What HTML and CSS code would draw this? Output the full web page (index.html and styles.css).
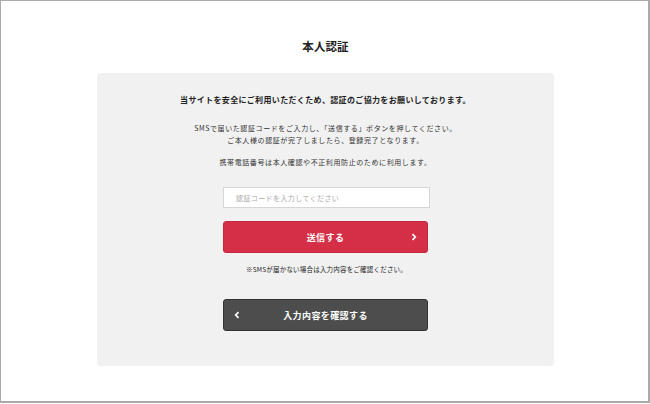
FILE: index.html
```html
<!DOCTYPE html>
<html lang="ja">
<head>
<meta charset="utf-8">
<title>本人認証</title>
<link rel="stylesheet" href="styles.css">
</head>
<body>
<div class="frame">
  <h1 class="title">本人認証</h1>
  <main class="card">
    <p class="lead">当サイトを安全にご利用いただくため、認証のご協力をお願いしております。</p>
    <p class="text">SMSで届いた認証コードをご入力し、「送信する」ボタンを押してください。<br>ご本人様の認証が完了しましたら、登録完了となります。</p>
    <p class="text text-second">携帯電話番号は本人確認や不正利用防止のために利用します。</p>
    <form class="form">
      <input class="code-input" type="text" placeholder="認証コードを入力してください">
      <button class="btn btn-primary" type="button">
        <span class="btn-label">送信する</span>
        <svg class="chev chev-right" width="6" height="8" viewBox="0 0 6 8"><path d="M1.5 1.2 L4.3 4 L1.5 6.8" fill="none" stroke="#fff" stroke-width="1.7"/></svg>
      </button>
      <p class="note">※SMSが届かない場合は入力内容をご確認ください。</p>
      <button class="btn btn-dark" type="button">
        <svg class="chev chev-left" width="6" height="8" viewBox="0 0 6 8"><path d="M4.5 1.2 L1.7 4 L4.5 6.8" fill="none" stroke="#fff" stroke-width="1.7"/></svg>
        <span class="btn-label">入力内容を確認する</span>
      </button>
    </form>
  </main>
</div>
</body>
</html>
```
FILE: styles.css
```css
* { box-sizing: border-box; }
html, body { margin: 0; padding: 0; background: #fff; }
body {
  font-family: "Noto Sans CJK JP", "Noto Sans", sans-serif;
  color: #222;
}
.frame {
  width: 650px;
  height: 403px;
  border: 1px solid #aaa;
  border-right-width: 2px;
  border-bottom-width: 2px;
  padding-top: 37px;
}
.title {
  margin: 0;
  text-align: center;
  font-size: 11.5px;
  line-height: 16px;
  font-weight: 700;
  letter-spacing: 0.1px;
  padding-left: 2px;
}
.card {
  width: 457px;
  margin: 19px 0 0 96px;
  background: #f1f1f1;
  border-radius: 4px;
  padding: 21px 0 35px;
  text-align: center;
}
.lead {
  margin: 0;
  font-size: 8px;
  line-height: 12px;
  font-weight: 700;
  letter-spacing: 0.35px;
}
.text {
  margin: 16px 0 0;
  font-size: 7px;
  line-height: 12px;
  letter-spacing: 0.6px;
  color: #333;
}
.text-second { margin-top: 10px; }
.form {
  width: 207px;
  margin: 19px auto 0;
  display: flex;
  flex-direction: column;
  align-items: stretch;
  position: relative;
  left: 1px;
}
.code-input {
  height: 21px;
  border: 1px solid #d6d6d6;
  background: #fff;
  padding: 0 12px;
  font-family: inherit;
  font-size: 7px;
  letter-spacing: 0.4px;
  outline: none;
  margin: 0;
}
.code-input::placeholder { color: #aaa; }
.btn {
  height: 32px;
  border-radius: 3px;
  font-family: inherit;
  color: #fff;
  font-size: 9px;
  font-weight: 700;
  letter-spacing: 0.4px;
  display: flex;
  align-items: center;
  justify-content: center;
  position: relative;
  padding: 0;
  margin: 0;
  width: 205px;
}
.btn-primary {
  margin-top: 13px;
  background: #d42f47;
  border: 1px solid #c42840;
}
.btn-dark {
  margin-top: 25px;
  background: #4d4d4d;
  border: 1px solid #333;
}
.chev { position: absolute; top: 11px; }
.chev-right { right: 10px; }
.chev-left { left: 10px; }
.note {
  margin: 11px 0 0;
  font-size: 6.5px;
  line-height: 10px;
  letter-spacing: 0.2px;
  text-align: center;
  color: #222;
}
```
